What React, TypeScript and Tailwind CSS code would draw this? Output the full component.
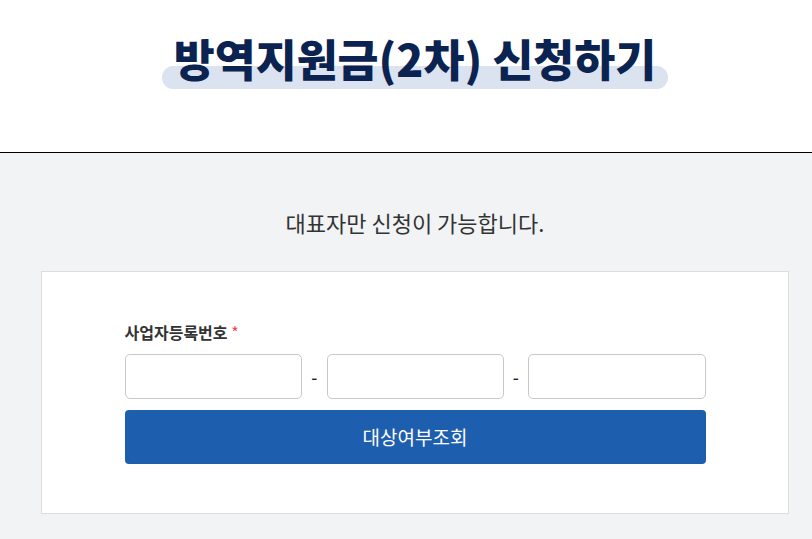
import React from "react";

export default function App() {
  const font = { fontFamily: '"Noto Sans CJK KR", "Noto Sans", sans-serif' };
  return (
    <div className="min-h-[539px] bg-[#f2f3f5]" style={font}>
      <header className="h-[153px] bg-white border-b border-black flex justify-center pl-[18px]">
        <div className="relative mt-[30px] h-[62px] px-[12px]">
          <div className="absolute left-0 right-0 top-[36px] h-[23px] rounded-full bg-[#dbe2f0]" />
          <h1 className="relative text-[44.5px] leading-[56px] font-black text-[#0b2350]">
            방역지원금(2차) 신청하기
          </h1>
        </div>
      </header>
      <main className="pl-[41px] pr-[23px] pt-[54px] pb-[25px]">
        <p className="text-center text-[22px] leading-[30px] text-[#333]">
          대표자만 신청이 가능합니다.
        </p>
        <div className="mt-[34px] bg-white border border-[#dddddd] pt-[49px] pb-[49px]">
          <div className="w-[581px] mx-auto">
            <div className="text-[16px] leading-[22px] font-bold text-[#333]">
              사업자등록번호 <span className="text-[#e84a4a] font-normal">*</span>
            </div>
            <div className="mt-[11px] flex items-center">
              <input className="w-[177px] h-[45px] border border-[#c8c8c8] rounded-[5px] bg-white" />
              <span className="w-[26px] text-center text-[17px] font-medium text-[#222]">-</span>
              <input className="w-[177px] h-[45px] border border-[#c8c8c8] rounded-[5px] bg-white" />
              <span className="w-[24px] text-center text-[17px] font-medium text-[#222]">-</span>
              <input className="w-[178px] h-[45px] border border-[#c8c8c8] rounded-[5px] bg-white" />
            </div>
            <button className="mt-[11px] w-[581px] h-[54px] rounded-[4px] bg-[#1e5eae] text-white text-[19px]">
              대상여부조회
            </button>
          </div>
        </div>
      </main>
    </div>
  );
}
